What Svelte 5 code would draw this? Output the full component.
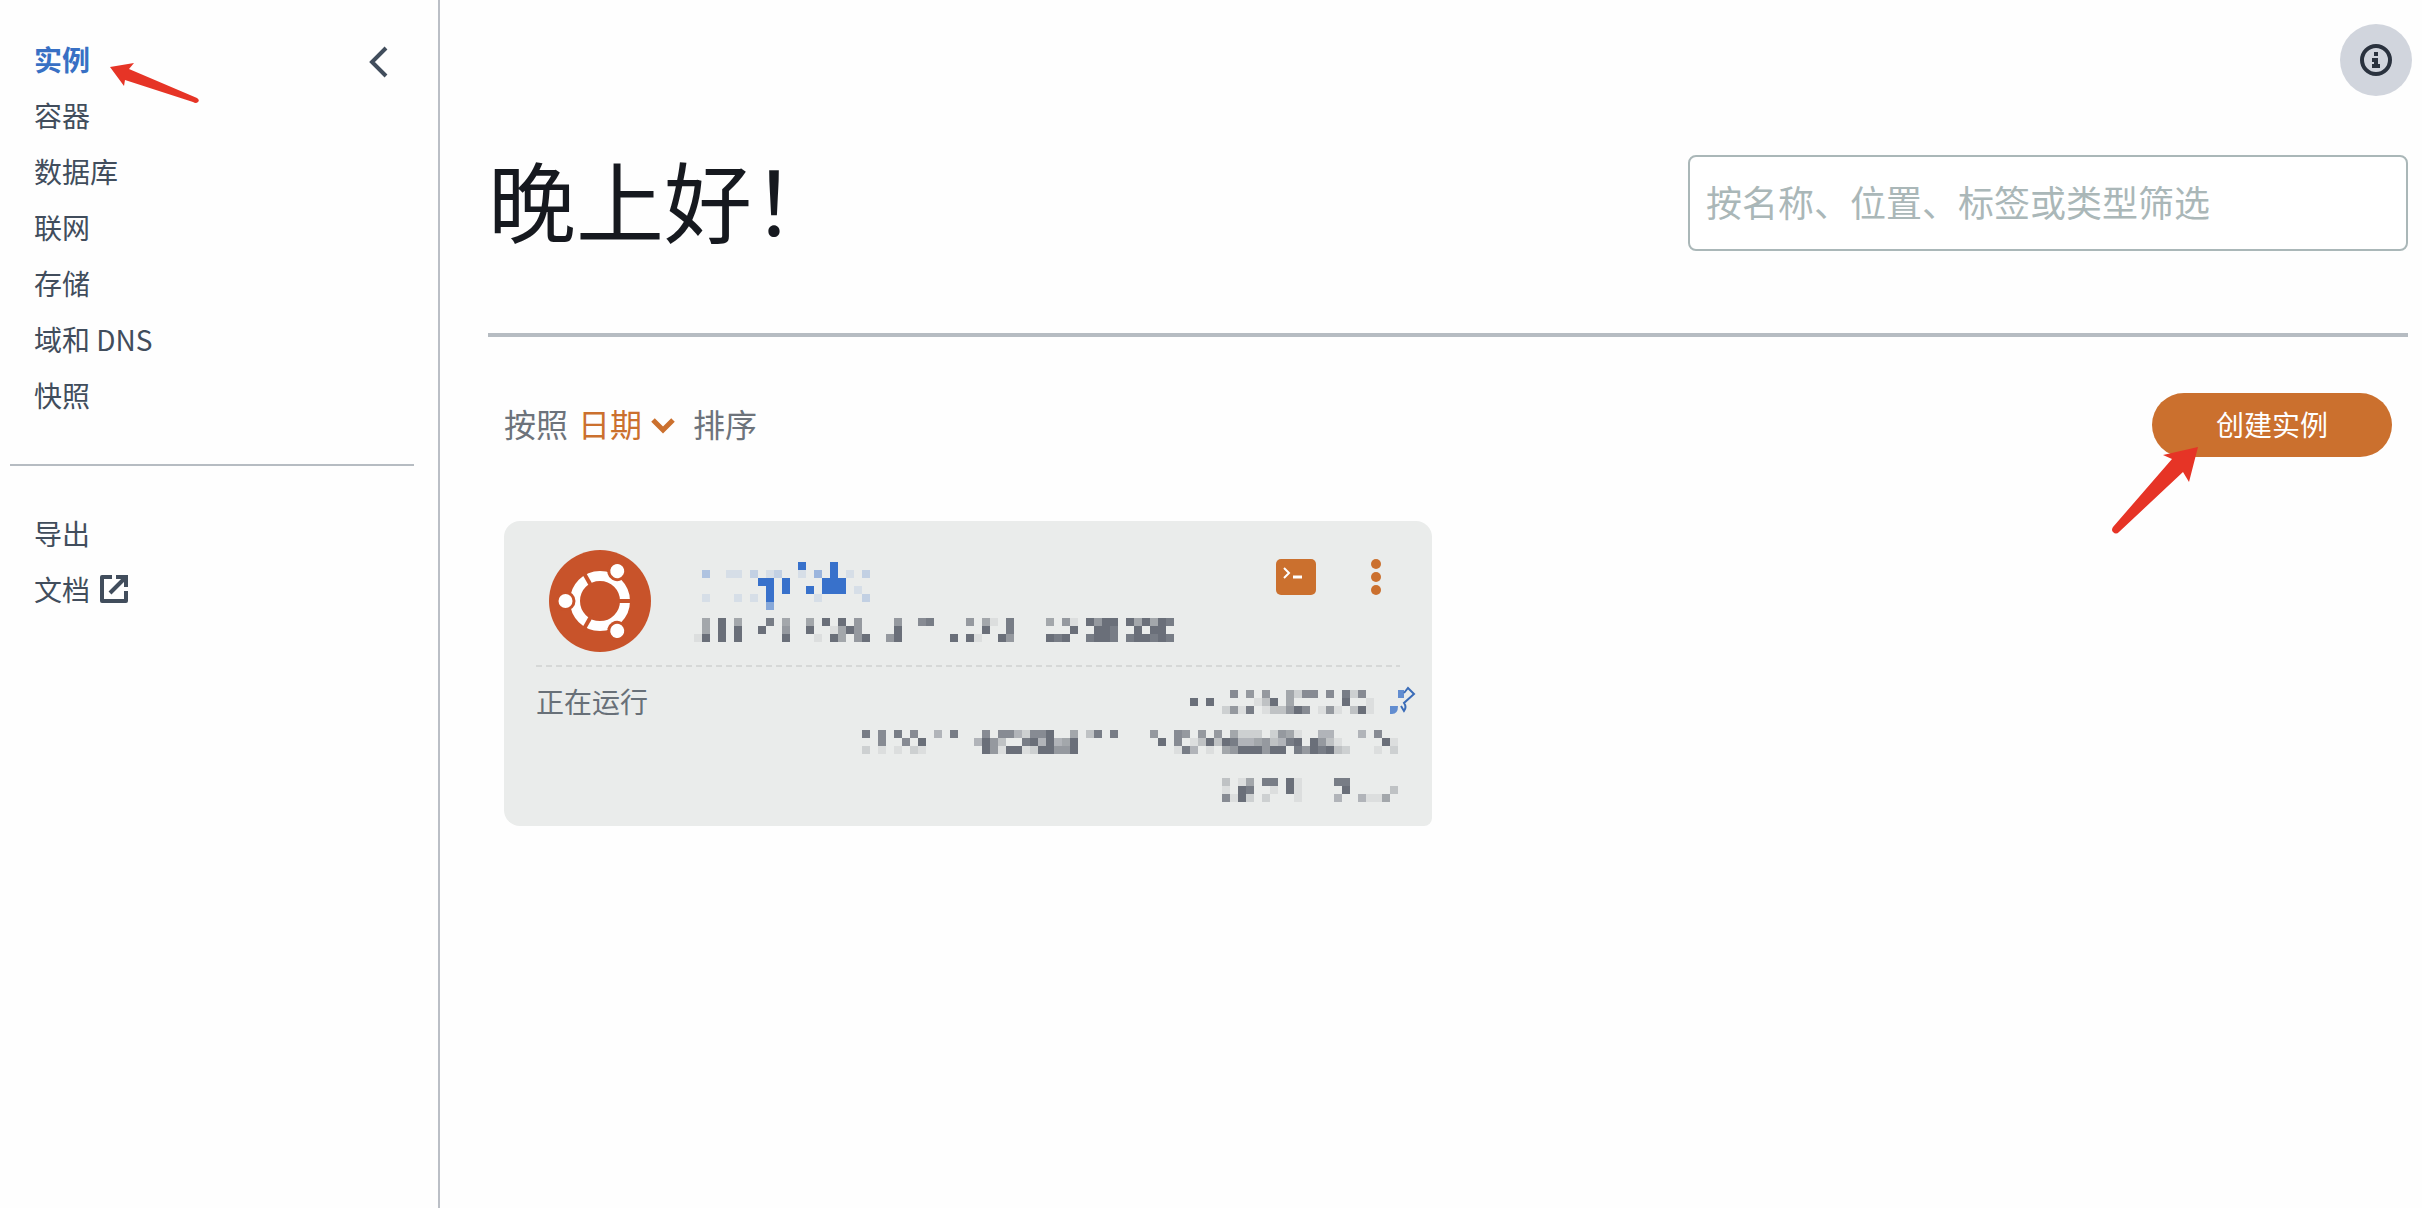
<script>
  const services = ['实例', '容器', '数据库', '联网', '存储', '域和 DNS', '快照']
  let active = '实例'
  let filter = ''
  let sort = 'date'

  const CELL = 8

  // each digit is the strength of one masked cell, a dot is an empty one
  const masked = {
    name: [
      '............9...9....',
      '3..11.2.12..1.4.9.1.2',
      '.......99.9....999...',
      '........9.9..9.999.1.',
      '1...1.1.9.....1.....2',
      '........5............'
    ],
    specs: [
      '.5.9.5...8.5..5.9.9.6....6..78....6.51.8....5.61.9699.959598',
      '.5.9.9..9..6..9..1596....9..........9..8.......9..998..9.99.',
      '19.9.9.....9...1.95.69..69......9.91..96....989..8998.899898'
    ],
    ipv4: [
      '.....7.6.6..5277.7.827.',
      '9.9.....139.5......9..1',
      '....2618.133697.161.391'
    ],
    ipv6: [
      '8.7.8.7..4.8...7.7742779..5.38.8....6..76.6.6.5222.2651..44...4.7..',
      '..7..7.9......4963..8949459..........9.7.13939844563489.9631.....91',
      '2.1.1.21.......961991299669............184.1.56999699.8698932...1.2'
    ],
    zone: [
      '3.15.88.91....88......',
      '1.98..1.91.....9.....3',
      '7192.2...1....4..4115.'
    ]
  }

  function cells(rows) {
    const list = []
    rows.forEach((row, y) => {
      [...row].forEach((level, x) => {
        if (level !== '.') {
          list.push({ x: x * CELL, y: y * CELL, opacity: level / 9 })
        }
      })
    })
    return list
  }
</script>

{#snippet mosaic(rows, kind)}
  <svg
    class="mosaic {kind}"
    width={rows[0].length * CELL}
    height={rows.length * CELL}
    shape-rendering="crispEdges"
    aria-hidden="true"
  >
    {#each cells(rows) as cell}
      <rect x={cell.x} y={cell.y} width={CELL} height={CELL} fill-opacity={cell.opacity} />
    {/each}
  </svg>
{/snippet}

<div class="layout">
  <aside>
    <nav>
      <ul>
        {#each services as service}
          <li>
            <a href="#{service}" class:active={service === active}>{service}</a>
            {#if service === active}
              <svg class="pointer to-nav" width="90" height="42" viewBox="0 0 90 42" aria-hidden="true">
                <path d="M0 6 L24 2 L19 8 L87 37 Q90 39 88 41 Q86 43 83 41 L15 19 L14 25 Z" />
              </svg>
            {/if}
          </li>
        {/each}
      </ul>
      <button class="collapse" aria-label="收起">
        <svg width="20" height="32" viewBox="0 0 20 32">
          <path d="M18 2 L4 16 L18 30" />
        </svg>
      </button>
    </nav>
    <hr>
    <ul class="extra">
      <li><a href="#export">导出</a></li>
      <li>
        <a href="#docs">
          文档
          <svg width="28" height="28" viewBox="0 0 28 28" aria-hidden="true">
            <path d="M12 2 H2 V26 H26 V16" fill="none" stroke="#414d5c" stroke-width="4" stroke-linejoin="round" />
            <path d="M10 18 L24 4" fill="none" stroke="#414d5c" stroke-width="4" />
            <path d="M16 0 H28 V12 H24 V4 H16 Z" fill="#414d5c" />
          </svg>
        </a>
      </li>
    </ul>
  </aside>

  <main>
    <div class="topbar">
      <button class="info" aria-label="信息">
        <svg width="32" height="32" viewBox="0 0 32 32">
          <circle cx="16" cy="16" r="14" fill="none" stroke="#2a323e" stroke-width="4" />
          <path d="M14 8 H18 V12 H14 Z M12 14 H18 V20 H20 V24 H12 V20 H14 V18 H12 Z" fill="#2a323e" />
        </svg>
      </button>
    </div>

    <header>
      <h1>晚上好！</h1>
      <input
        type="text"
        bind:value={filter}
        aria-label="筛选"
        placeholder="按名称、位置、标签或类型筛选"
      >
    </header>

    <div class="toolbar">
      <div class="sort">
        <label for="sort">按照</label>
        <div class="select">
          <select id="sort" bind:value={sort}>
            <option value="date">日期</option>
            <option value="name">名称</option>
          </select>
          <svg width="24" height="24" viewBox="0 0 24 24" aria-hidden="true">
            <path d="M2 9 L12 19 L22 9" />
          </svg>
        </div>
        <span>排序</span>
      </div>
      <div class="create">
        <button>创建实例</button>
        <svg class="pointer to-create" width="88" height="88" viewBox="0 0 88 88" aria-hidden="true">
          <path d="M86 0 L51 8 L60 12 L1 80 Q-1 83 1 85 Q4 88 7 85 L71 25 L77 35 Z" />
        </svg>
      </div>
    </div>

    <section class="instances">
      <article>
        <div class="summary">
          <svg class="logo" width="102" height="102" viewBox="-51 -51 102 102" role="img" aria-label="Ubuntu">
            <circle r="51" fill="#c8532a" />
            <circle r="25" fill="none" stroke="#fff" stroke-width="10" />
            {#each [0, 120, 240] as angle}
              <g transform="rotate({angle})">
                <path d="M16 0 H34" stroke="#c8532a" stroke-width="4" />
                <circle cx="-34.5" r="10" fill="#c8532a" />
                <circle cx="-34.5" r="7" fill="#fff" />
              </g>
            {/each}
          </svg>
          <div class="details">
            {@render mosaic(masked.name, 'blue')}
            {@render mosaic(masked.specs, 'grey')}
          </div>
          <div class="actions">
            <button aria-label="连接">
              <svg width="40" height="36" viewBox="0 0 40 36">
                <rect width="40" height="36" rx="5" fill="#cb702e" />
                <path d="M8 9 L13 14 L8 19" fill="none" stroke="#fff" stroke-width="2" />
                <path d="M17 18 H26" stroke="#fff" stroke-width="3" />
              </svg>
            </button>
            <button aria-label="更多">
              <svg width="10" height="36" viewBox="0 0 10 36">
                <g fill="#cb702e">
                  <circle cx="5" cy="5" r="5" />
                  <circle cx="5" cy="18" r="5" />
                  <circle cx="5" cy="31" r="5" />
                </g>
              </svg>
            </button>
          </div>
        </div>
        <svg class="divider" width="100%" height="2" aria-hidden="true">
          <line x1="0" y1="1" x2="100%" y2="1" />
        </svg>
        <div class="status">
          <p>正在运行</p>
          <div class="addresses">
            <div class="address">
              {@render mosaic(masked.ipv4, 'grey')}
              <svg class="pin" width="26" height="28" viewBox="0 0 26 28" aria-hidden="true">
                <path d="M8 4 H14 V12 H8 Z M0 20 H8 Q8 28 2 28 H0 Z" fill="#628dd0" />
                <path d="M14 7 L18 2 L24 8 L14 17 Q17 21 14 25 L11 20" fill="none" stroke="#3a6cb8" stroke-width="2" />
              </svg>
            </div>
            {@render mosaic(masked.ipv6, 'grey')}
            {@render mosaic(masked.zone, 'grey')}
          </div>
        </div>
      </article>
    </section>
  </main>
</div>

<style>
  :global(body) {
    margin: 0;
    background: #fefefe;
    font-family: "Noto Sans CJK SC", sans-serif;
  }
  .layout {
    display: flex;
    min-height: 100vh;
  }
  svg {
    display: block;
    flex: none;
  }
  button {
    padding: 0;
    border: 0;
    background: none;
    font-family: inherit;
    cursor: pointer;
  }
  aside {
    box-sizing: border-box;
    width: 440px;
    flex: none;
    padding-top: 31px;
    border-right: 2px solid #bbbfc6;
  }
  nav {
    display: flex;
    justify-content: space-between;
    align-items: flex-start;
    padding-right: 50px;
  }
  ul {
    margin: 0;
    padding: 0 0 0 34px;
    list-style: none;
  }
  li {
    position: relative;
    height: 56px;
  }
  li a {
    display: flex;
    align-items: center;
    gap: 10px;
    height: 56px;
    color: #414d5c;
    font-size: 28px;
    text-decoration: none;
    white-space: nowrap;
  }
  li a.active {
    color: #3870c4;
    font-weight: 700;
  }
  .collapse {
    padding-top: 15px;
  }
  .collapse path {
    fill: none;
    stroke: #414d5c;
    stroke-width: 4;
  }
  hr {
    height: 2px;
    margin: 41px 24px 39px 10px;
    border: 0;
    background: #b6bcc2;
  }
  .pointer {
    position: absolute;
    fill: #e63426;
    pointer-events: none;
  }
  .to-nav {
    left: 76px;
    top: 30px;
  }
  .to-create {
    left: -40px;
    top: 54px;
  }
  main {
    flex: 1;
    min-width: 0;
  }
  .topbar {
    display: flex;
    justify-content: flex-end;
    padding: 24px 10px 0;
  }
  .info {
    display: flex;
    align-items: center;
    justify-content: center;
    width: 72px;
    height: 72px;
    border-radius: 50%;
    background: #d1d5dd;
  }
  header {
    display: flex;
    justify-content: space-between;
    align-items: flex-start;
    margin: 59px 14px 0 48px;
    padding-bottom: 82px;
    border-bottom: 4px solid #b6bcc2;
  }
  h1 {
    margin: 0;
    color: #16191f;
    font-size: 88px;
    font-weight: 400;
    line-height: 86px;
  }
  input {
    box-sizing: border-box;
    width: 720px;
    height: 96px;
    padding: 0 16px 4px;
    border: 2px solid #aab7b8;
    border-radius: 8px;
    background: #fff;
    color: #16191f;
    font-family: inherit;
    font-size: 36px;
  }
  input::placeholder {
    color: #aab7b8;
    opacity: 1;
  }
  .toolbar {
    display: flex;
    justify-content: space-between;
    align-items: flex-start;
    padding: 56px 30px 64px 64px;
  }
  .sort {
    display: flex;
    align-items: center;
    height: 60px;
    color: #6d737b;
    font-size: 32px;
  }
  .select {
    display: flex;
    align-items: center;
    gap: 8px;
    margin: 0 18px 0 10px;
  }
  select {
    appearance: none;
    padding: 0;
    border: 0;
    background: none;
    color: #cb702e;
    font: inherit;
  }
  .select path {
    fill: none;
    stroke: #cb702e;
    stroke-width: 5;
  }
  .create {
    position: relative;
  }
  .create button {
    display: block;
    width: 240px;
    height: 64px;
    padding-bottom: 2px;
    border-radius: 32px;
    background: #cb702e;
    color: #fff;
    font-size: 28px;
  }
  .instances {
    display: grid;
    grid-template-columns: 1fr 1fr;
    gap: 32px;
    padding: 0 30px 32px 64px;
  }
  article {
    box-sizing: border-box;
    padding: 0 32px 24px;
    border-radius: 16px 16px 8px 16px;
    background: #eaeceb;
  }
  .summary {
    display: flex;
    align-items: flex-start;
    height: 144px;
  }
  .logo {
    margin: 29px 43px 0 13px;
  }
  .details {
    display: flex;
    flex-direction: column;
    flex: 1;
    gap: 8px;
    padding-top: 41px;
  }
  .mosaic.blue {
    margin-left: 8px;
    fill: #3871cb;
  }
  .mosaic.grey {
    fill: #6a6f79;
  }
  .actions {
    display: flex;
    gap: 55px;
    padding: 38px 19px 0 0;
  }
  .divider line {
    stroke: #d6d8d7;
    stroke-width: 2;
    stroke-dasharray: 6 4;
  }
  .status {
    display: flex;
    justify-content: space-between;
    align-items: flex-start;
  }
  .status p {
    margin: 14px 0 0;
    color: #687078;
    font-size: 28px;
    line-height: 40px;
  }
  .addresses {
    display: flex;
    flex-direction: column;
    align-items: flex-end;
    padding: 19px 2px 0 0;
  }
  .address {
    display: flex;
    align-items: flex-end;
    gap: 16px;
    margin: 0 -18px 16px 0;
  }
  .addresses > .mosaic + .mosaic {
    margin-top: 24px;
  }
</style>
